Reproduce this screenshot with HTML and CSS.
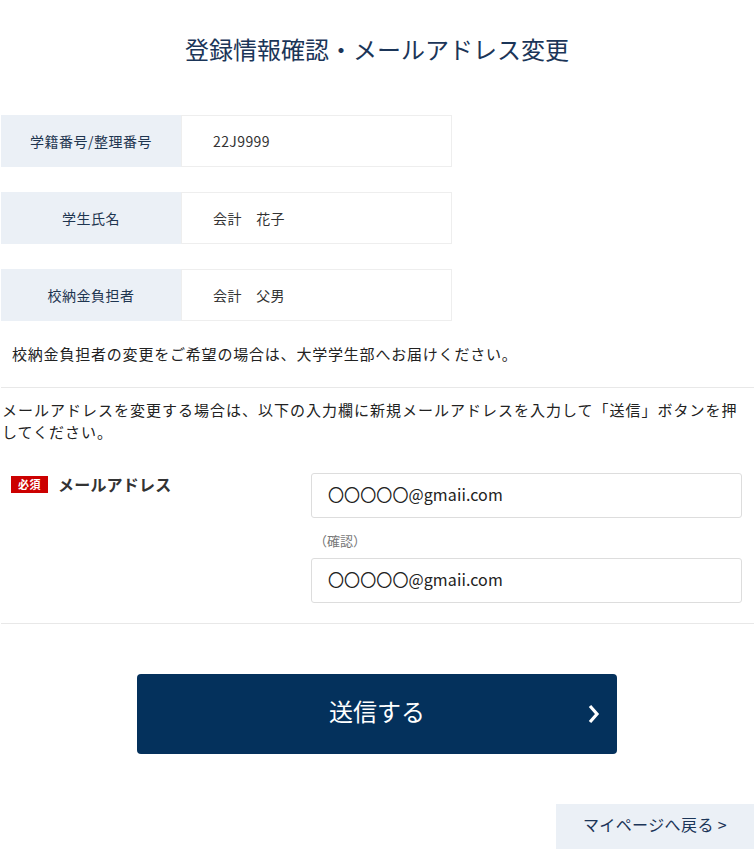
FILE: index.html
```html
<!DOCTYPE html>
<html lang="ja">
<head>
<meta charset="utf-8">
<link rel="stylesheet" href="styles.css">
</head>
<body>
<div class="page">
  <h1 class="title">登録情報確認・メールアドレス変更</h1>
  <div class="info">
    <div class="row"><div class="label">学籍番号/整理番号</div><div class="value">22J9999</div></div>
    <div class="row"><div class="label">学生氏名</div><div class="value">会計　花子</div></div>
    <div class="row"><div class="label">校納金負担者</div><div class="value">会計　父男</div></div>
  </div>
  <p class="note">校納金負担者の変更をご希望の場合は、大学学生部へお届けください。</p>
  <hr class="rule">
  <p class="lead">メールアドレスを変更する場合は、以下の入力欄に新規メールアドレスを入力して「送信」ボタンを押してください。</p>
  <div class="field">
    <div class="field-label"><span class="req">必須</span><span class="field-name">メールアドレス</span></div>
    <div class="field-inputs">
      <div class="input">〇〇〇〇〇@gmaii.com</div>
      <div class="confirm">（確認）</div>
      <div class="input">〇〇〇〇〇@gmaii.com</div>
    </div>
  </div>
  <hr class="rule rule2">
  <div class="btn-wrap">
    <button class="submit"><span>送信する</span>
      <svg class="chev" width="14" height="22" viewBox="0 0 14 22"><path d="M3 3 L10 11 L3 19" fill="none" stroke="#fff" stroke-width="3.2"/></svg>
    </button>
  </div>
  <div class="back-wrap"><a class="back">マイページへ戻る &gt;</a></div>
</div>
</body>
</html>
```

FILE: styles.css
```css
* { box-sizing: border-box; }
html, body { margin: 0; padding: 0; background: #fff; }
body {
  font-family: "Noto Sans CJK JP", "Noto Sans", sans-serif;
  color: #333;
}
.page { width: 754px; height: 849px; overflow: hidden; }
.title {
  margin: 0;
  padding-top: 32px;
  height: 115px;
  text-align: center;
  font-weight: 400;
  font-size: 24px;
  line-height: 34px;
  color: #1b3558;
}
.info { display: flex; flex-direction: column; gap: 25px; padding-left: 1px; }
.row { display: flex; height: 52px; width: 451px; }
.label {
  width: 180px;
  background: #ebf0f6;
  display: flex; align-items: center; justify-content: center;
  font-size: 14px; color: #1e3550;
  letter-spacing: 0.5px;
}
.value {
  flex: 1;
  border: 1px solid #eee;
  display: flex; align-items: center;
  padding-left: 31px;
  font-size: 14px; color: #333;
  letter-spacing: 0.4px;
}
.note {
  margin: 0;
  padding: 20px 0 0 12px;
  font-size: 15px; line-height: 26px;
  letter-spacing: 0.8px;
  color: #222;
  height: 66px;
}
.rule { border: 0; border-top: 1px solid #e8e8e8; margin: 0 0 0 1px; }
.lead {
  margin: 0;
  padding: 11px 0 0 2px;
  font-size: 15px; line-height: 22px;
  letter-spacing: 1px;
  color: #222;
  width: 752px;
}
.field { display: flex; padding-top: 30px; }
.field-label { width: 311px; display: flex; align-items: flex-start; padding-left: 11px; padding-top: 0; }
.req {
  background: #cc0000; color: #fff;
  font-size: 11px; font-weight: 700; line-height: 17px;
  padding: 0 7px; margin-top: 3px;
  letter-spacing: 0.5px;
}
.field-name { font-size: 16px; font-weight: 700; color: #333; margin-left: 10px; line-height: 22px; letter-spacing: 0.2px; }
.field-inputs { width: 431px; }
.input {
  height: 45px;
  border: 1px solid #ddd; border-radius: 3px;
  display: flex; align-items: center;
  padding-left: 16px; padding-bottom: 3px;
  font-size: 16px; color: #222;
  letter-spacing: 0.1px;
}
.confirm { font-size: 13px; color: #777; padding: 13px 0 0 3px; height: 40px; line-height: 20px; }
.rule2 { margin-top: 20px; }
.btn-wrap { display: flex; padding: 50px 0 0 137px; }
.submit {
  width: 480px; height: 80px;
  background: #04315c; border: 0; border-radius: 4px;
  position: relative;
  font-family: inherit; font-size: 24px; color: #fff;
  display: flex; align-items: center; justify-content: center;
  padding: 0; padding-bottom: 8px;
}
.chev { position: absolute; right: 16px; top: 29px; }
.back-wrap { display: flex; justify-content: flex-end; padding-top: 50px; }
.back {
  width: 198px; height: 45px;
  background: #ebf0f6;
  display: flex; align-items: center; justify-content: center;
  padding-bottom: 5px;
  font-size: 16px; color: #1b3558;
  letter-spacing: 0.4px;
}
```
